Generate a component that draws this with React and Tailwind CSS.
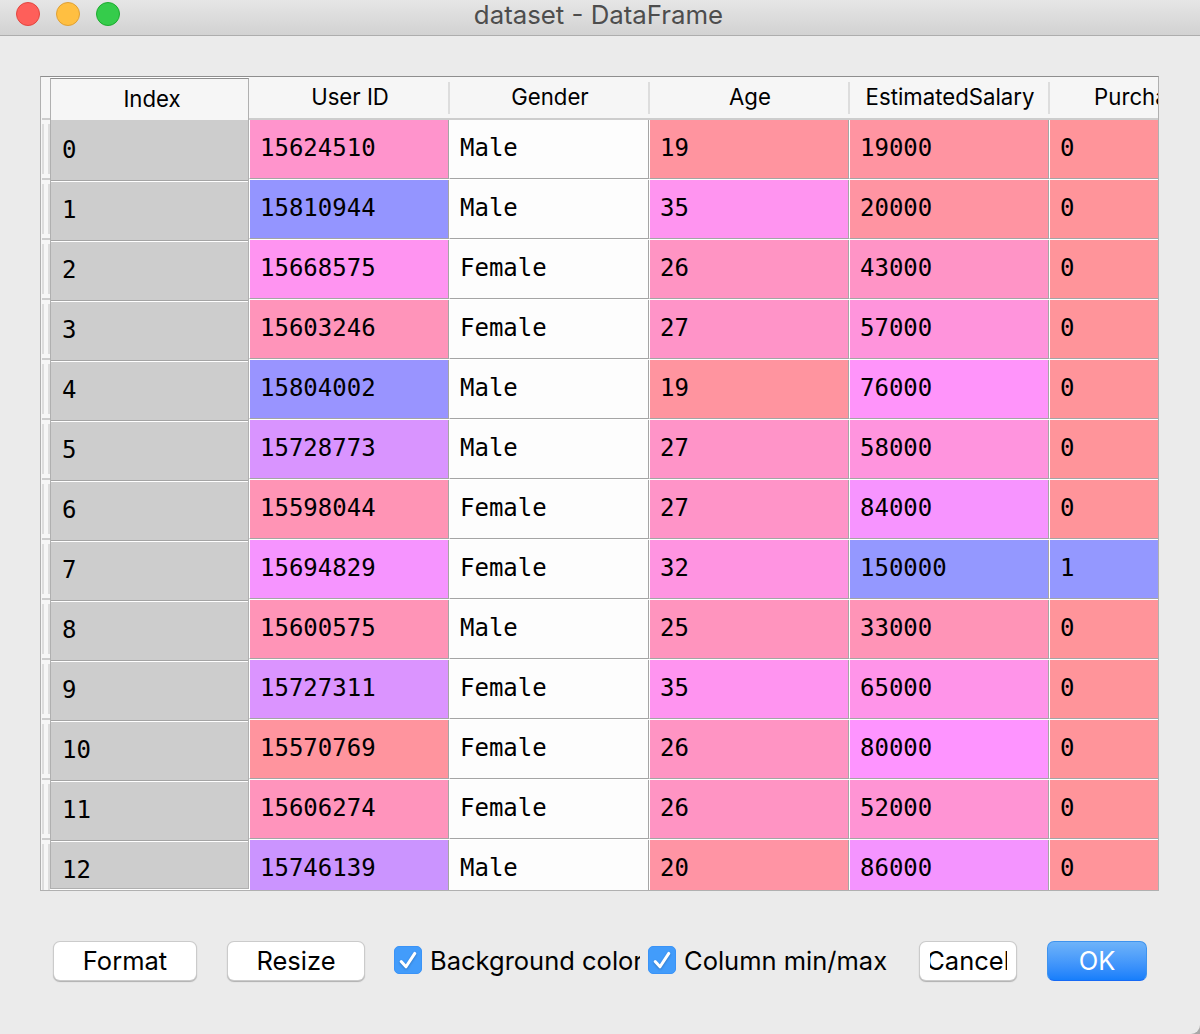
const ROWS = [
  [15624510, 'Male', 19, 19000, 0],
  [15810944, 'Male', 35, 20000, 0],
  [15668575, 'Female', 26, 43000, 0],
  [15603246, 'Female', 27, 57000, 0],
  [15804002, 'Male', 19, 76000, 0],
  [15728773, 'Male', 27, 58000, 0],
  [15598044, 'Female', 27, 84000, 0],
  [15694829, 'Female', 32, 150000, 1],
  [15600575, 'Male', 25, 33000, 0],
  [15727311, 'Female', 35, 65000, 0],
  [15570769, 'Female', 26, 80000, 0],
  [15606274, 'Female', 26, 52000, 0],
  [15746139, 'Male', 20, 86000, 0],
];

const COLUMNS = [
  { label: 'User ID', min: 15566689, max: 15815236 },
  { label: 'Gender' },
  { label: 'Age', min: 18, max: 60 },
  { label: 'EstimatedSalary', min: 15000, max: 150000 },
  { label: 'Purchased', min: 0, max: 1 },
];

// Hue runs from blue (column maximum) to red (column minimum).
function cellColor(value, { min, max }) {
  if (min === undefined) return '#fdfdfd';
  const hue = 0.66 + (0.33 * (max - value)) / (max - min);
  const channel = (n) => {
    const k = (n + hue * 6) % 6;
    const c = 1 - 0.7 * Math.max(0, Math.min(k, 4 - k, 1));
    return Math.round(255 * (0.4 + 0.6 * c));
  };
  return `rgb(${channel(5)}, ${channel(3)}, ${channel(1)})`;
}

function Check({ children, className }) {
  return (
    <label className={`flex h-10 items-center overflow-hidden whitespace-nowrap ${className}`}>
      <span className="mb-0.5 mr-2 flex size-7 shrink-0 items-center justify-center rounded-[5px] border border-[#3a93f7] bg-[#429cfb]">
        <svg width="26" height="26" viewBox="0 0 26 26" fill="none" className="drop-shadow-[0_1px_1px_rgba(0,0,0,0.25)]">
          <path d="M6.2 14.6 L11 19.8 L19.8 6.4" stroke="white" strokeWidth="3" strokeLinecap="round" strokeLinejoin="round" />
        </svg>
      </span>
      {children}
    </label>
  );
}

function Button({ children, className }) {
  return (
    <button className={`h-[38px] shrink-0 rounded-md bg-white leading-[38px] shadow-[0_0_0_1px_#cbcbcb,0_1px_1px_1px_#b0b0b0] ${className}`}>
      {children}
    </button>
  );
}

export default function App() {
  return (
    <div className="h-[1034px] w-[1200px] bg-[#a8a8a8]">
      <div className="flex h-full flex-col overflow-hidden rounded-br-[9px] bg-[#ebebeb] font-['Inter',sans-serif] text-[25.5px] text-black">
        <header className="grid h-9 shrink-0 grid-cols-[1fr_auto_1fr] border-b border-[#adadad] bg-linear-to-b from-[#e6e6e6] to-[#d2d2d2]">
          <div className="flex gap-4 pl-4 pt-0.5">
            <span className="size-6 rounded-full border border-[#e2463f] bg-[#fe5f5a]" />
            <span className="size-6 rounded-full border border-[#dfa035] bg-[#ffbf41]" />
            <span className="size-6 rounded-full border border-[#1dab2f] bg-[#35cc4b]" />
          </div>
          <h1 className="-mt-px pr-[3px] text-[25.8px] leading-8 text-[#4d4d4d]">dataset - DataFrame</h1>
        </header>

        <main className="ml-10 mt-10 flex h-[815px] w-[1119px] shrink-0 overflow-hidden border border-[#b0b0b0] border-t-[#8e8e8e] bg-white">
          <div className="w-[9px] shrink-0 bg-[#f6f6f6] pl-px">
            <div className="h-[43px] border-b-2 border-[#cdcdcd]" />
            {ROWS.map((_, i) => (
              <div key={i} className="flex h-[60px] flex-col justify-between border-b-2 border-[#cdcdcd] pt-1">
                <div className="h-[50px] border-x-2 border-[#dddddd]" />
              </div>
            ))}
          </div>

          <div className="mt-px h-[811px] w-[199px] shrink-0 overflow-hidden border border-[#b0b0b0] border-t-[#8e8e8e]">
            <div className="h-[41px] bg-[#f6f6f6] pl-[5px] text-center text-[22.2px] leading-[39px]">Index</div>
            {ROWS.map((_, i) => (
              <div key={i} className={`border-b border-[#a5a5a5] bg-[#cdcdcd] pl-[11px] font-['DejaVu_Sans_Mono',monospace] text-[24px] ${i ? 'h-[60px] border-t border-t-white leading-[56px]' : 'h-[61px] leading-[60px]'}`}>
                {i}
              </div>
            ))}
          </div>

          <div className="w-[909px] shrink-0 overflow-hidden">
            <div className="flex h-[43px] w-[1002px] border-b-2 border-[#cdcdcd] bg-[#f6f6f6] pl-px">
              {COLUMNS.map(({ label }) => (
                <div key={label} className="flex h-full w-[200px] shrink-0 items-start">
                  <span className="flex-1 pl-0.5 text-center text-[22.2px] leading-[39px]">{label}</span>
                  <span className="mt-[5px] h-8 w-0.5 bg-[#dddddd]" />
                </div>
              ))}
            </div>
            {ROWS.map((row, r) => (
              <div key={r} className="flex h-[60px] w-[1001px] border-b border-white">
                {row.map((value, c) => (
                  <div
                    key={c}
                    className="h-[59px] w-[200px] shrink-0 border-b border-l border-r border-b-[#a5a5a5] border-l-white border-r-[#a5a5a5] pl-2.5 font-['DejaVu_Sans_Mono',monospace] text-[24px] leading-[56px]"
                    style={{ backgroundColor: cellColor(value, COLUMNS[c]) }}
                  >
                    {value}
                  </div>
                ))}
              </div>
            ))}
          </div>
        </main>

        <footer className="mt-[50px] flex items-center pl-[54px]">
          <Button className="w-[142px]">Format</Button>
          <Button className="ml-8 w-[136px]">Resize</Button>
          <Check className="ml-[30px] w-[246px]">Background color</Check>
          <Check className="ml-2 w-[240px]">Column min/max</Check>
          <Button className="ml-8 flex w-24 justify-center">
            <span className="flex h-[38px] w-[77px] items-center justify-center overflow-hidden">Cancel</span>
          </Button>
          <button className="ml-[31px] h-10 w-[100px] rounded-[7px] border border-[#3e93ee] border-b-[#1569f5] bg-linear-to-b from-[#6eb3f9] to-[#167efb] leading-[38px] text-white">OK</button>
        </footer>
      </div>
    </div>
  );
}
